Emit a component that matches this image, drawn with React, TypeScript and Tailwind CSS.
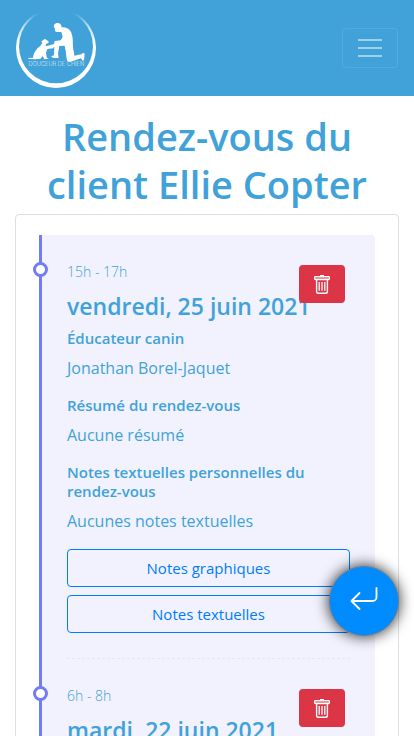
import React from "react";

type Appointment = {
  hours: string;
  date: string;
  educator: string;
  summary: string;
  notes: string;
};

const appointments: Appointment[] = [
  {
    hours: "15h - 17h",
    date: "vendredi, 25 juin 2021",
    educator: "Jonathan Borel-Jaquet",
    summary: "Aucune résumé",
    notes: "Aucunes notes textuelles",
  },
  {
    hours: "6h - 8h",
    date: "mardi, 22 juin 2021",
    educator: "Jonathan Borel-Jaquet",
    summary: "Aucune résumé",
    notes: "Aucunes notes textuelles",
  },
];

function Logo() {
  return (
    <svg viewBox="48 24 240 240" className="size-20" role="img" aria-label="Douceur de Chien">
      <defs>
        <linearGradient id="ring" x1="0" y1="38" x2="0" y2="130" gradientUnits="userSpaceOnUse">
          <stop offset="0" stopColor="#fff" stopOpacity="0" />
          <stop offset="0.4" stopColor="#fff" stopOpacity="0.6" />
          <stop offset="1" stopColor="#fff" />
        </linearGradient>
      </defs>
      <path
        fill="url(#ring)"
        fillRule="evenodd"
        d="M168 24a120 120 0 1 0 0 240a120 120 0 1 0 0-240zM168 28a111 111 0 0 1 0 222a111 111 0 0 1 0-222z"
      />
      <g fill="#fff">
        <path d="M162 81C160 73 167 68 174 69C182 70 186 77 184 82C197 81 209 86 214 98C220 113 218 126 219 141C220 151 223 160 223 167L244 163L250 158L254 161L252 181L247 182L243 175L212 185L202 184C198 173 199 160 196 148L194 137L178 138L174 161L176 174L160 174L153 169L162 166L163 141L144 144L138 139L162 132L164 123L182 121L188 111L184 96L173 96C166 97 163 91 165 87Z" />
        <path d="M124 124L130 120L135 116L139 120L145 123L146 128L138 132L137 139L150 138L161 141L160 145L142 147L138 158L140 172L146 176L133 178L128 168L122 176L105 178L86 177L84 174L99 173C101 158 108 148 120 139L127 129Z" />
      </g>
      <text
        x="169"
        y="198"
        textAnchor="middle"
        fill="#fff"
        fillOpacity="0.8"
        fontSize="17"
        fontFamily="Inter, sans-serif"
        fontWeight="300"
      >
        DOUCEUR DE CHIEN
      </text>
    </svg>
  );
}

function TrashIcon() {
  return (
    <svg viewBox="0 0 16 19" className="h-[19px] w-4" fill="none" stroke="currentColor" aria-hidden="true">
      <path d="M6 0.8h4" strokeWidth="1.6" />
      <rect x="0.7" y="1.7" width="14.6" height="2.8" rx="0.5" fill="currentColor" fillOpacity="0.3" strokeWidth="1.3" />
      <path d="M2.6 4.5V16.5a1.8 1.8 0 0 0 1.8 1.8h7.2a1.8 1.8 0 0 0 1.8-1.8V4.5" strokeWidth="1.4" />
      <path d="M5.2 7v8.8M8 7v8.8M10.8 7v8.8" strokeWidth="1.3" />
    </svg>
  );
}

function ReturnIcon() {
  return (
    <svg
      viewBox="0 0 28 24"
      className="h-6 w-7"
      fill="none"
      stroke="currentColor"
      strokeWidth="1.8"
      strokeLinecap="round"
      strokeLinejoin="round"
      aria-hidden="true"
    >
      <path d="M26.5 1v9a4 4 0 0 1-4 4H1.5M9.5 6L1.5 14l8 8" />
    </svg>
  );
}

function Field({ title, children }: { title: string; children: React.ReactNode }) {
  return (
    <>
      <h3 className="mb-2 text-[15px] leading-[19px] font-semibold">{title}</h3>
      <p className="mb-4 text-base leading-6">{children}</p>
    </>
  );
}

function NoteButton({ children }: { children: React.ReactNode }) {
  return (
    <button
      type="button"
      className="h-[38px] w-full rounded border border-[#007bff] text-[15px] text-[#007bff]"
    >
      {children}
    </button>
  );
}

function TimelineItem({ item }: { item: Appointment }) {
  return (
    <li className="relative mb-[25px] border-b border-dashed border-[#e6e6f2] pb-[25px] last:mb-0 last:border-0">
      <span className="absolute top-0.5 -left-[34px] size-[15px] rounded-full border-[3px] border-[#727cf5] bg-white" />
      <p className="mb-2 text-sm leading-6 font-light">{item.hours}</p>
      <h2 className="mb-2 text-[23px] leading-[29px] font-semibold whitespace-nowrap">{item.date}</h2>
      <button
        type="button"
        aria-label="Supprimer"
        className="absolute top-[5px] right-[5px] flex h-[38px] w-[46px] items-center justify-center rounded bg-[#dc3545] text-white"
      >
        <TrashIcon />
      </button>
      <Field title="Éducateur canin">{item.educator}</Field>
      <Field title="Résumé du rendez-vous">{item.summary}</Field>
      <Field title="Notes textuelles personnelles du rendez-vous">{item.notes}</Field>
      <div className="flex flex-col gap-2">
        <NoteButton>Notes graphiques</NoteButton>
        <NoteButton>Notes textuelles</NoteButton>
      </div>
    </li>
  );
}

export default function App() {
  return (
    <div className="min-h-screen bg-white font-['Open_Sans','Noto_Sans',sans-serif] text-[#40a2d9]">
      <header className="flex items-center justify-between bg-[#40a2d9] px-4 py-2">
        <a href="#">
          <Logo />
        </a>
        <button
          type="button"
          aria-label="Menu"
          className="flex h-10 w-14 flex-col items-center justify-center gap-1.5 rounded border border-white/10"
        >
          <span className="h-0.5 w-6 bg-white/50" />
          <span className="h-0.5 w-6 bg-white/50" />
          <span className="h-0.5 w-6 bg-white/50" />
        </button>
      </header>
      <main className="px-[15px] pt-4 pb-4">
        <h1 className="mb-1.5 text-center text-[38px] leading-[48px] font-semibold">
          Rendez-vous du client Ellie Copter
        </h1>
        <section className="rounded border border-[#dfdfdf] px-[23px] py-5">
          <ul className="rounded-r border-l-[3px] border-[#727cf5] bg-[#f2f2fe] p-[25px]">
            {appointments.map((item) => (
              <TimelineItem key={item.date} item={item} />
            ))}
          </ul>
        </section>
      </main>
      <button
        type="button"
        aria-label="Retour"
        className="fixed right-[15px] bottom-[100px] flex size-[70px] items-center justify-center rounded-full border border-[#5f7f9f] bg-[#008cff] pb-1 text-white shadow-[0_0_14px_1px_rgba(0,0,0,0.75)]"
      >
        <ReturnIcon />
      </button>
    </div>
  );
}
